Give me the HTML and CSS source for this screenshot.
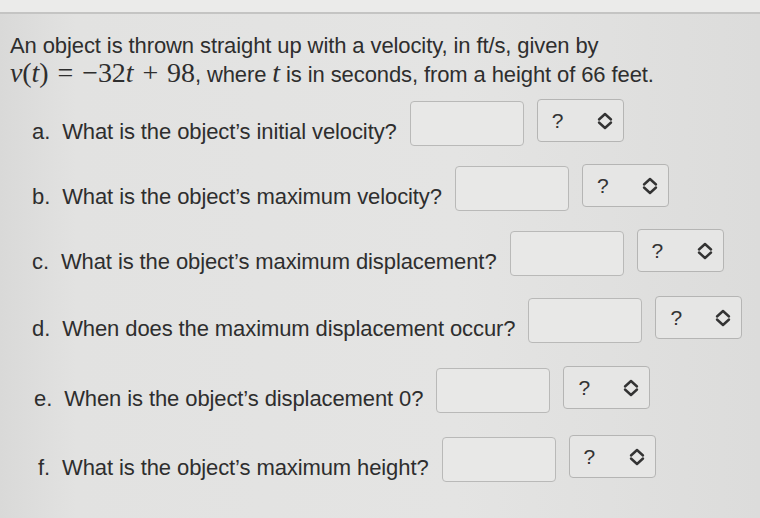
FILE: index.html
```html
<!DOCTYPE html>
<html>
<head>
<meta charset="utf-8">
<link rel="stylesheet" href="styles.css">
</head>
<body>
<div class="topbar"></div>
<div class="content">
  <p class="intro">An object is thrown straight up with a velocity, in ft/s, given by<br>
  <span class="math"><i>v</i>(<i>t</i>)<span class="op">=</span>−32<i>t</i><span class="op">+</span>98</span>, where <span class="math"><i>t</i></span> is in seconds, from a height of 66 feet.</p>

  <div class="row r-a">
    <span class="label">a.&nbsp; What is the object’s initial velocity?</span>
    <span class="input"></span>
    <span class="select"><span class="q">?</span><svg class="chev" viewBox="0 0 16 18" width="16" height="18"><path d="M2 7.5 L8 2 L14 7.5 M2 10.5 L8 16 L14 10.5" fill="none" stroke="#333" stroke-width="2.4" stroke-linecap="round" stroke-linejoin="round"/></svg></span>
  </div>
  <div class="row r-b">
    <span class="label">b.&nbsp; What is the object’s maximum velocity?</span>
    <span class="input"></span>
    <span class="select"><span class="q">?</span><svg class="chev" viewBox="0 0 16 18" width="16" height="18"><path d="M2 7.5 L8 2 L14 7.5 M2 10.5 L8 16 L14 10.5" fill="none" stroke="#333" stroke-width="2.4" stroke-linecap="round" stroke-linejoin="round"/></svg></span>
  </div>
  <div class="row r-c">
    <span class="label">c.&nbsp; What is the object’s maximum displacement?</span>
    <span class="input"></span>
    <span class="select"><span class="q">?</span><svg class="chev" viewBox="0 0 16 18" width="16" height="18"><path d="M2 7.5 L8 2 L14 7.5 M2 10.5 L8 16 L14 10.5" fill="none" stroke="#333" stroke-width="2.4" stroke-linecap="round" stroke-linejoin="round"/></svg></span>
  </div>
  <div class="row r-d">
    <span class="label">d.&nbsp; When does the maximum displacement occur?</span>
    <span class="input"></span>
    <span class="select"><span class="q">?</span><svg class="chev" viewBox="0 0 16 18" width="16" height="18"><path d="M2 7.5 L8 2 L14 7.5 M2 10.5 L8 16 L14 10.5" fill="none" stroke="#333" stroke-width="2.4" stroke-linecap="round" stroke-linejoin="round"/></svg></span>
  </div>
  <div class="row r-e">
    <span class="label">e.&nbsp; When is the object’s displacement 0?</span>
    <span class="input"></span>
    <span class="select"><span class="q">?</span><svg class="chev" viewBox="0 0 16 18" width="16" height="18"><path d="M2 7.5 L8 2 L14 7.5 M2 10.5 L8 16 L14 10.5" fill="none" stroke="#333" stroke-width="2.4" stroke-linecap="round" stroke-linejoin="round"/></svg></span>
  </div>
  <div class="row r-f">
    <span class="label">f.&nbsp; What is the object’s maximum height?</span>
    <span class="input"></span>
    <span class="select"><span class="q">?</span><svg class="chev" viewBox="0 0 16 18" width="16" height="18"><path d="M2 7.5 L8 2 L14 7.5 M2 10.5 L8 16 L14 10.5" fill="none" stroke="#333" stroke-width="2.4" stroke-linecap="round" stroke-linejoin="round"/></svg></span>
  </div>
</div>
</body>
</html>
```

FILE: styles.css
```css
html, body {
  margin: 0;
  padding: 0;
}
body {
  width: 760px;
  height: 518px;
  overflow: hidden;
  background: linear-gradient(90deg, #d9d9d8 0%, #e2e2e1 10%, #e4e4e3 60%, #dcdcdb 100%);
  font-family: "Liberation Sans", Arial, Helvetica, sans-serif;
  color: #2e2e2e;
}
.topbar {
  height: 12px;
  background: #ebebea;
  border-bottom: 2px solid #c4c4c3;
}
.content {
  padding: 0 0 0 10px;
}
.intro {
  margin: 18px 0 0 0;
  font-size: 22px;
  line-height: 27px;
  letter-spacing: -0.1px;
}
.math {
  font-family: "Liberation Serif", "Times New Roman", serif;
  font-size: 28px;
  line-height: 27px;
}
.math i {
  font-style: italic;
}
.op {
  margin: 0 9px;
}
.row {
  display: flex;
  align-items: center;
  padding-left: 22px;
  height: 45px;
}
.label {
  font-size: 22px;
  letter-spacing: -0.1px;
  margin-right: 13px;
  margin-top: 16px;
}
.input {
  width: 114px;
  height: 45px;
  border: 1.5px solid #b9b9b8;
  border-radius: 4px;
  background: #e8e8e7;
  box-sizing: border-box;
  margin-right: 13px;
}
.select {
  width: 87px;
  height: 43px;
  border: 1.5px solid #b5b5b4;
  border-radius: 4px;
  background: #e6e6e5;
  box-sizing: border-box;
  display: flex;
  align-items: center;
  justify-content: space-between;
  padding: 0 10px 0 14px;
  margin-top: -6px;
}
.q {
  font-size: 21px;
  color: #333;
}
.chev { display: block; }
.r-a { margin-top: 13px; }
.r-b { margin-top: 20px; }
.r-c { margin-top: 20px; }
.r-d { margin-top: 22px; }
.r-e { margin-top: 25px; padding-left: 24px; }
.r-f { margin-top: 24px; padding-left: 28px; }
```
